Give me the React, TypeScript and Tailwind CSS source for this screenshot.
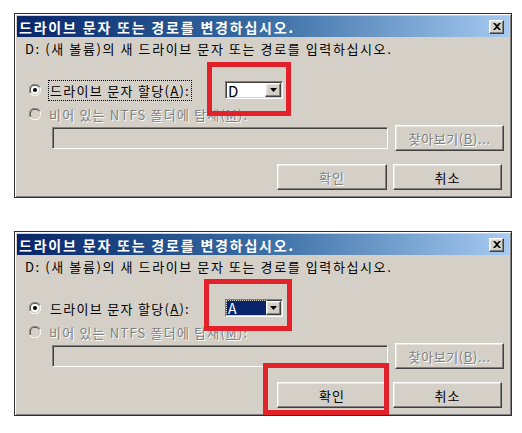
const raised =
  "border border-t-white border-l-white border-r-[#404040] border-b-[#404040] shadow-[inset_-1px_-1px_#808080,inset_1px_1px_#e8e6e0]";
const sunken =
  "border border-t-[#808080] border-l-[#808080] border-r-white border-b-white shadow-[inset_1px_1px_#404040,inset_-1px_-1px_#d4d0c8]";

function Radio({ checked, disabled }: { checked?: boolean; disabled?: boolean }) {
  return (
    <svg width="12" height="12" viewBox="0 0 12 12" className="shrink-0">
      <path d="M11 3 A5.5 5.5 0 0 0 3 1 A5.5 5.5 0 0 0 1 9" stroke="#808080" strokeWidth="1" fill="none" />
      <path d="M10 3.5 A4.5 4.5 0 0 0 3.5 2 A4.5 4.5 0 0 0 2 8.5" stroke="#404040" strokeWidth="1" fill="none" />
      <circle cx="6" cy="6" r="4" fill={disabled ? "#d4d0c8" : "#ffffff"} />
      <path d="M1 9 A5.5 5.5 0 0 0 11 3" stroke="#ffffff" strokeWidth="1" fill="none" />
      {checked && <circle cx="6" cy="6" r="2" fill="#000" />}
    </svg>
  );
}

function Dialog({ second }: { second?: boolean }) {
  return (
    <div className="w-[498px] h-[185px] bg-[#d4d0c8] border border-[#303030] shadow-[inset_1px_1px_#ffffff,inset_-1px_-1px_#808080] p-[2px] flex flex-col font-['Noto_Sans_CJK_KR','Liberation_Sans',sans-serif]">
      {/* title bar */}
      <div className="h-[21px] flex items-center justify-between pl-[2px] pr-[5px] bg-gradient-to-r from-[#0a246a] via-[#3a6ea5] to-[#a6caf0]">
        <span className="text-white font-bold text-[14px] leading-none tracking-[1.8px]">
          드라이브 문자 또는 경로를 변경하십시오.
        </span>
        <div className={`w-[15px] h-[14px] bg-[#d4d0c8] flex items-center justify-center ${raised}`}>
          <svg width="8" height="7" viewBox="0 0 8 7">
            <path d="M0 0 L2 0 L4 2 L6 0 L8 0 L5 3.5 L8 7 L6 7 L4 5 L2 7 L0 7 L3 3.5 Z" fill="#000" />
          </svg>
        </div>
      </div>

      <div className="pl-[8px] pr-[5px] flex flex-col text-[13px] text-black leading-none">
        <div className="mt-[5px] tracking-[1.6px]">D: (새 볼륨)의 새 드라이브 문자 또는 경로를 입력하십시오.</div>

        {/* radio 1 + combo */}
        <div className="mt-[26px] flex items-center h-[18px]">
          <div className="w-[24px] pl-[4px] flex">
            <Radio checked />
          </div>
          <span className="w-[176px]">
            <span
              className={`tracking-[1.3px] px-[1px] ${
                second ? "" : "outline outline-1 outline-dotted outline-black"
              }`}
            >
              드라이브 문자 할당(<span className="underline">A</span>):
            </span>
          </span>
          <div className={`w-[58px] h-[18px] bg-white flex items-center ${sunken}`}>
            <div className="flex-1 pl-[1px] flex items-center">
              {second ? (
                <span className="bg-[#0a246a] text-white px-[1px] w-[39px] outline outline-1 outline-dotted outline-[#d4d0c8] text-[14px]">A</span>
              ) : (
                <span className="text-[15px] pl-[1px]">D</span>
              )}
            </div>
            <div className={`w-[16px] h-[14px] mr-[1px] bg-[#d4d0c8] flex items-center justify-center ${raised}`}>
              <svg width="7" height="4" viewBox="0 0 7 4">
                <path d="M0 0 L7 0 L3.5 4 Z" fill="#000" />
              </svg>
            </div>
          </div>
        </div>

        {/* radio 2 */}
        <div className="mt-[8px] flex items-center h-[14px]">
          <div className="w-[24px] pl-[4px] flex">
            <Radio disabled />
          </div>
          <span className="text-[#808080] [text-shadow:1px_1px_#ffffff] tracking-[1.2px]">
            비어 있는 NTFS 폴더에 탑재(<span className="underline">M</span>):
          </span>
        </div>

        {/* path field + browse */}
        <div className="mt-[4px] flex items-center gap-[7px]">
          <div className={`ml-[27px] w-[337px] h-[22px] bg-[#d4d0c8] ${sunken}`} />
          <button className={`w-[109px] h-[26px] bg-[#d4d0c8] text-[#808080] [text-shadow:1px_1px_#ffffff] text-[13px] tracking-[0.6px] ${raised}`}>
            찾아보기(<span className="underline">B</span>)...
          </button>
        </div>

        {/* ok / cancel */}
        <div className="mt-[13px] flex justify-end gap-[6px] pr-[2px]">
          <button
            className={`w-[110px] h-[26px] bg-[#d4d0c8] text-[13px] tracking-[1px] ${raised} ${
              second ? "text-black" : "text-[#808080] [text-shadow:1px_1px_#ffffff]"
            }`}
          >
            확인
          </button>
          <button className={`w-[109px] h-[26px] bg-[#d4d0c8] text-[13px] tracking-[1px] text-black ${raised}`}>취소</button>
        </div>
      </div>
    </div>
  );
}

export default function App() {
  return (
    <div className="relative w-[522px] h-[433px] bg-white overflow-hidden">
      <div className="pt-[13px] pl-[14px] flex flex-col gap-[33px]">
        <Dialog />
        <Dialog second />
      </div>

      {/* red annotation boxes */}
      <div className="absolute left-[207px] top-[62px] w-[84px] h-[54px] border-[5px] border-[#e2212b]" />
      <div className="absolute left-[204px] top-[279px] w-[88px] h-[52px] border-[5px] border-[#e2212b]" />
      <div className="absolute left-[263px] top-[363px] w-[126px] h-[52px] border-[5px] border-[#e2212b]" />
    </div>
  );
}
